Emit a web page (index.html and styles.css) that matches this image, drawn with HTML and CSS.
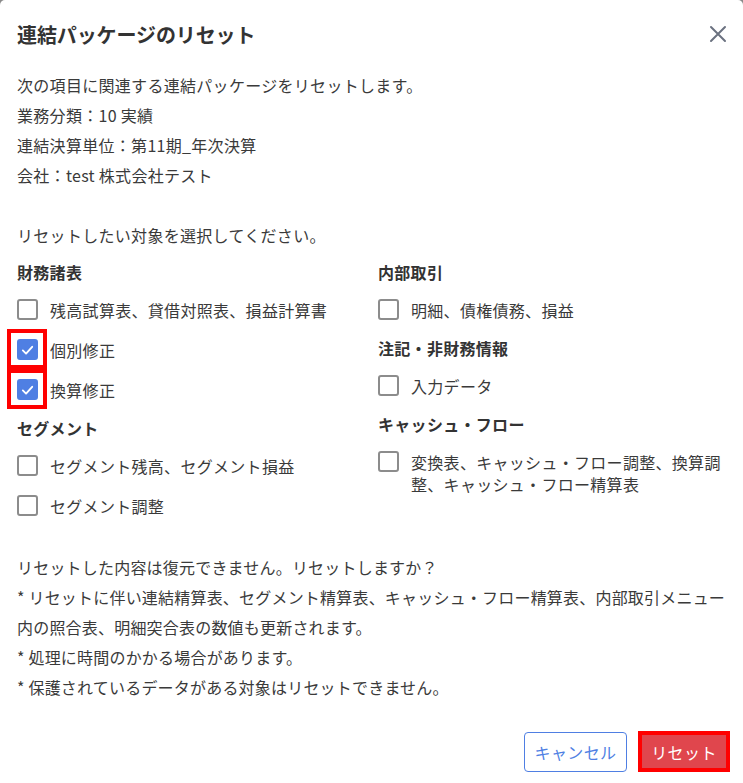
FILE: index.html
```html
<!DOCTYPE html>
<html lang="ja">
<head>
<meta charset="utf-8">
<title>連結パッケージのリセット</title>
<link rel="stylesheet" href="styles.css">
</head>
<body>
<div class="dialog">
  <header class="dlg-header">
    <h1 class="dlg-title">連結パッケージのリセット</h1>
    <button class="close-btn" aria-label="閉じる">
      <svg width="18" height="18" viewBox="0 0 18 18"><path d="M2 2L16 16M16 2L2 16" stroke="#6b7280" stroke-width="2" stroke-linecap="round" fill="none"/></svg>
    </button>
  </header>
  <div class="dlg-body">
    <div class="info">
      <p>次の項目に関連する連結パッケージをリセットします。</p>
      <p>業務分類：10 実績</p>
      <p>連結決算単位：第11期_年次決算</p>
      <p>会社：test 株式会社テスト</p>
    </div>
    <p class="prompt">リセットしたい対象を選択してください。</p>
    <div class="groups">
      <div class="col">
        <h2 class="group-title">財務諸表</h2>
        <label class="item"><span class="cb"></span><span class="lbl">残高試算表、貸借対照表、損益計算書</span></label>
        <label class="item"><span class="cb checked hl"><svg viewBox="0 0 20 20" width="18" height="18"><path d="M4.5 10.5L8.3 14.2L15.5 6.2" stroke="#fff" stroke-width="2.2" fill="none" stroke-linecap="round" stroke-linejoin="round"/></svg></span><span class="lbl">個別修正</span></label>
        <label class="item"><span class="cb checked hl"><svg viewBox="0 0 20 20" width="18" height="18"><path d="M4.5 10.5L8.3 14.2L15.5 6.2" stroke="#fff" stroke-width="2.2" fill="none" stroke-linecap="round" stroke-linejoin="round"/></svg></span><span class="lbl">換算修正</span></label>
        <h2 class="group-title">セグメント</h2>
        <label class="item"><span class="cb"></span><span class="lbl">セグメント残高、セグメント損益</span></label>
        <label class="item"><span class="cb"></span><span class="lbl">セグメント調整</span></label>
      </div>
      <div class="col">
        <h2 class="group-title">内部取引</h2>
        <label class="item"><span class="cb"></span><span class="lbl">明細、債権債務、損益</span></label>
        <h2 class="group-title">注記・非財務情報</h2>
        <label class="item"><span class="cb"></span><span class="lbl">入力データ</span></label>
        <h2 class="group-title">キャッシュ・フロー</h2>
        <label class="item"><span class="cb"></span><span class="lbl">変換表、キャッシュ・フロー調整、換算調整、キャッシュ・フロー精算表</span></label>
      </div>
    </div>
    <div class="notes">
      <p>リセットした内容は復元できません。リセットしますか？</p>
      <p>* リセットに伴い連結精算表、セグメント精算表、キャッシュ・フロー精算表、内部取引メニュー内の照合表、明細突合表の数値も更新されます。</p>
      <p>* 処理に時間のかかる場合があります。</p>
      <p>* 保護されているデータがある対象はリセットできません。</p>
    </div>
  </div>
  <footer class="dlg-footer">
    <button class="btn btn-cancel">キャンセル</button>
    <button class="btn btn-reset">リセット</button>
  </footer>
</div>
</body>
</html>
```
FILE: styles.css
```css
* { box-sizing: border-box; }
html, body {
  margin: 0;
  padding: 0;
  background: #8a8a8a;
}
body {
  font-family: "Noto Sans CJK JP", "Noto Sans", sans-serif;
  color: #3a3a3a;
  font-size: 16px;
}
.dialog {
  width: 743px;
  height: 783px;
  background: #fff;
  border-radius: 5px 5px 0 0;
  display: flex;
  flex-direction: column;
}
.dlg-header {
  display: flex;
  align-items: center;
  justify-content: space-between;
  padding: 20px 16px 20px 17px;
  height: 70px;
}
.dlg-title {
  margin: 0;
  font-size: 20px;
  font-weight: 700;
  line-height: 30px;
  color: #333;
  letter-spacing: -0.1px;
}
.close-btn {
  border: 0;
  background: none;
  padding: 0;
  width: 18px;
  height: 18px;
  margin-top: -2px;
  display: flex;
}
.dlg-body {
  padding: 0 16px 0 17px;
  letter-spacing: 0.3px;
}
p { margin: 0; }
.info p, .notes p, .prompt {
  line-height: 30px;
}
.info { margin-bottom: 30px; }
.prompt { margin-bottom: 4px; }
.groups {
  display: grid;
  grid-template-columns: 349px 1fr;
  column-gap: 12px;
}
.col { display: flex; flex-direction: column; }
.group-title {
  margin: 0;
  font-size: 16px;
  font-weight: 700;
  line-height: 24px;
  padding: 6px 0 6px;
  color: #333;
}
.item {
  display: flex;
  align-items: flex-start;
  gap: 12px;
  padding: 9px 0;
}
.cb {
  flex: none;
  position: relative;
  width: 21px;
  height: 21px;
  border: 2px solid #8c8c8c;
  border-radius: 3px;
  background: #fff;
  display: flex;
  align-items: center;
  justify-content: center;
}
.cb.checked {
  background: #4f7fe3;
  border-color: #4f7fe3;
}
.cb.hl::after {
  content: "";
  position: absolute;
  top: -12px;
  left: -12px;
  right: -11px;
  bottom: -11px;
  border: 4px solid #ff0000;
}
.lbl {
  line-height: 22px;
}
.notes { margin-top: 26px; letter-spacing: 0.2px; }
.dlg-footer {
  display: flex;
  justify-content: flex-end;
  align-items: center;
  gap: 11px;
  padding: 29px 13px 0 0;
}
.btn {
  font-family: "Noto Sans CJK JP", "Noto Sans", sans-serif;
  font-size: 16px;
  letter-spacing: 0.4px;
  border-radius: 4px;
  cursor: pointer;
}
.btn-cancel {
  width: 103px;
  height: 40px;
  background: #fff;
  color: #4f7fe3;
  border: 1px solid #4f7fe3;
}
.btn-reset {
  width: 92px;
  height: 41px;
  background: #e0464d;
  color: #fff;
  border: 0;
  border-radius: 0;
  outline: 4px solid #ff0000;
  outline-offset: -4px;
}
```
